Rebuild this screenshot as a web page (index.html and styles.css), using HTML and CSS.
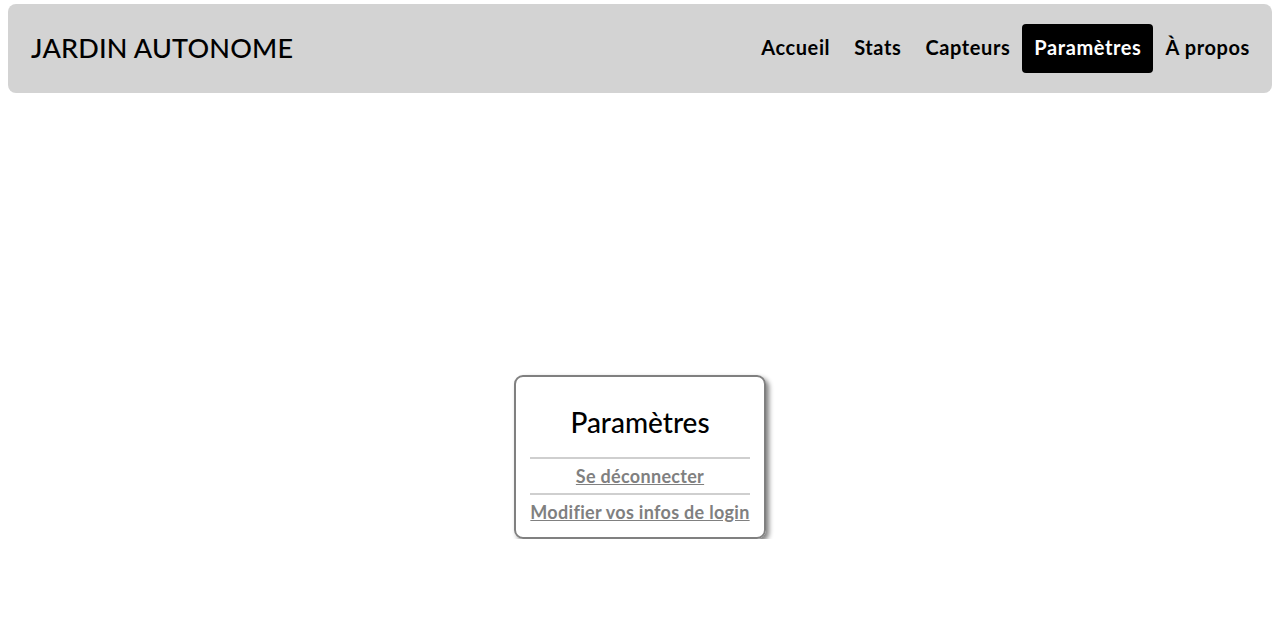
FILE: index.html
```html
<!DOCTYPE html>
<html lang="fr">
<head>
<meta charset="utf-8">
<title>Jardin Autonome</title>
<link rel="stylesheet" href="styles.css">
</head>
<body>
<header class="topbar">
  <div class="brand">JARDIN AUTONOME</div>
  <nav class="nav">
    <a class="nav-link" href="#">Accueil</a>
    <a class="nav-link" href="#">Stats</a>
    <a class="nav-link" href="#">Capteurs</a>
    <a class="nav-link active" href="#">Paramètres</a>
    <a class="nav-link" href="#">À propos</a>
  </nav>
</header>
<main class="main">
  <section class="card">
    <h2 class="card-title">Paramètres</h2>
    <hr class="sep">
    <a class="card-link" href="#">Se déconnecter</a>
    <hr class="sep">
    <a class="card-link" href="#">Modifier vos infos de login</a>
  </section>
</main>
</body>
</html>
```
FILE: styles.css
```css
* { box-sizing: border-box; }
html, body { margin: 0; padding: 0; background: #fff; }
body {
  font-family: "Lato", "Noto Sans", sans-serif;
  color: #000;
}
.topbar {
  margin: 4px 8px 0;
  height: 89px;
  background: #d3d3d3;
  border-radius: 8px;
  display: flex;
  align-items: center;
  justify-content: space-between;
  padding: 0 10px 0 23px;
}
.brand {
  font-size: 27px;
  font-weight: 500;
  letter-spacing: 0.2px;
  margin-top: -2px;
}
.nav {
  display: flex;
  align-items: center;
}
.nav-link {
  display: block;
  padding: 0 12px;
  height: 49px;
  line-height: 47px;
  font-size: 20px;
  font-weight: 700;
  letter-spacing: 0.6px;
  color: #000;
  text-decoration: none;
  border-radius: 4px;
}
.nav-link.active {
  background: #000;
  color: #fff;
}
.main {
  display: flex;
  justify-content: center;
  padding-top: 282px;
}
.card {
  width: 252px;
  height: 164px;
  border: 2px solid #808080;
  border-radius: 9px;
  box-shadow: 3px 3px 5px #808080;
  padding: 0 14px;
  display: flex;
  flex-direction: column;
  align-items: center;
}
.card-title {
  margin: 27px 0 0;
  height: 36px;
  line-height: 36px;
  font-size: 28px;
  font-weight: 500;
}
.sep {
  width: 100%;
  margin: 17px 0 0;
  border: 0;
  border-top: 2px solid #cfcfcf;
  height: 0;
}
.sep + .card-link { margin-top: 4px; }
.card-link + .sep { margin-top: 4px; }
.card-link {
  font-size: 18px;
  font-weight: 700;
  letter-spacing: 0.3px;
  line-height: 26px;
  color: #808080;
  text-decoration: underline;
}
```
